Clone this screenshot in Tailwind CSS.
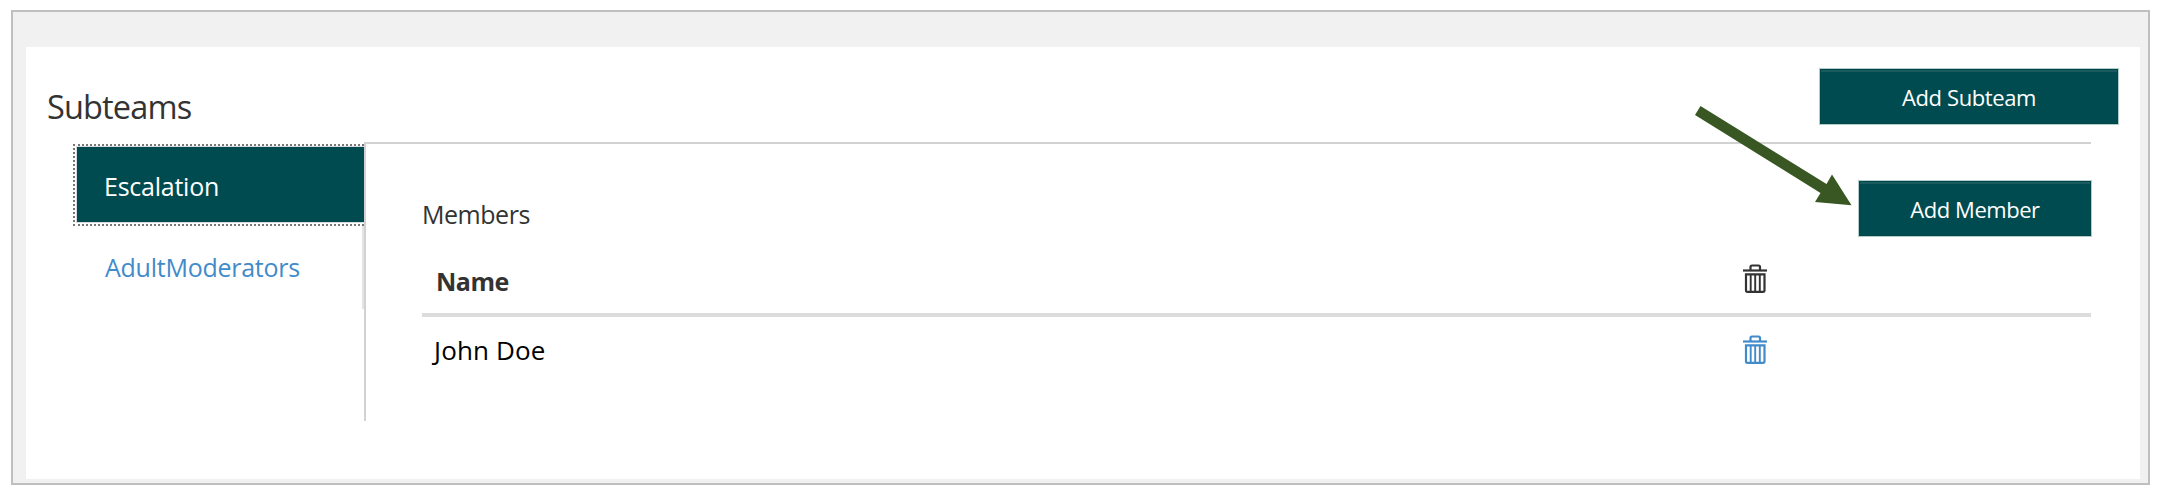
<!DOCTYPE html>
<html lang="en">
<head>
<meta charset="utf-8">
<title>Subteams</title>
<script src="https://cdn.jsdelivr.net/npm/@tailwindcss/browser@4"></script>
</head>
<body class="bg-white font-['Open_Sans','Noto_Sans',sans-serif] text-[#333]">
<svg class="hidden">
  <symbol id="trash" viewBox="0 0 24 29" fill="none" stroke="currentColor">
    <path d="M0 6.5H24" stroke-width="2.2"/>
    <path d="M7.500 6V3Q7.500 1.500 9 1.500H15.500Q17 1.500 17 3V6" stroke-width="2.200"/>
    <path d="M3 10.400H21.500V26.500Q21.500 27.800 20 27.800H4.500Q3 27.800 3 26.500Z" stroke-width="2.200"/>
    <path d="M7.700 10V28M12.200 10V28M16.800 10V28" stroke-width="1.900"/>
  </symbol>
</svg>
<div class="relative h-[491px] w-[2157px] overflow-hidden pl-[11px] pt-2.5">
  <div class="h-[475px] w-[2139px] border-2 border-[#bfbfbf] bg-[#f1f1f1] pl-[13px] pt-[35px]">
    <main class="h-[432px] w-[2114px] bg-white">
      <header class="flex h-[95px] items-start justify-between pl-[21px] pr-[22px]">
        <h1 class="mt-[40px] text-[32.5px] leading-10 tracking-[-0.85px]">Subteams</h1>
        <button class="mt-[22px] h-[55px] w-[298px] border border-[#00474a] bg-[#004b4f] text-[22px] leading-none tracking-[-0.4px] text-white shadow-[inset_0_2px_0_#1b5b5f,0_0_0_1px_#b5cccc]">Add Subteam</button>
      </header>
      <div class="flex pl-[47px]">
        <nav class="w-[291px]">
          <div class="mt-[1.5px] h-[82px] border-2 border-r-0 border-dotted border-[#777] pl-0.5 pt-[1.5px]">
            <a class="flex h-[75px] items-center bg-[#004b4f] pl-[27px] pt-1 text-[25px] tracking-[-0.24px] text-white shadow-[0_0_0_1px_#d5dbdb]">Escalation</a>
          </div>
          <a class="flex h-[83px] items-center border-r-2 border-[#e4e4e4] pl-8 pt-0.5 text-[25px] tracking-[-0.25px] text-[#428bca]">AdultModerators</a>
        </nav>
        <section class="h-[279px] w-[1727px] border-l-2 border-t-2 border-[#d2d2d2] pl-14">
          <div class="flex h-[93px] items-start justify-between">
            <h2 class="mt-[50px] text-[25px] leading-10 tracking-[-0.47px]">Members</h2>
            <button class="mt-[37px] h-[55px] w-[232px] border border-[#00474a] bg-[#004b4f] text-[22px] leading-none tracking-[-0.46px] text-white shadow-[inset_0_2px_0_#1b5b5f,0_0_0_1px_#b5cccc]">Add Member</button>
          </div>
          <div class="flex h-20 items-start border-b-4 border-[#dcdcdc] pl-3.5">
            <span class="mt-[24px] w-[1307px] text-[25px] font-bold leading-10 tracking-[-0.5px]">Name</span>
            <svg class="mt-[27px] h-[29px] w-6"><use href="#trash"/></svg>
          </div>
          <div class="flex items-start pl-3">
            <span class="mt-[13px] w-[1309px] text-[26px] leading-10 tracking-[0.15px] text-black">John Doe</span>
            <svg class="mt-[18px] h-[29px] w-6 text-[#428bca]"><use href="#trash"/></svg>
          </div>
        </section>
      </div>
    </main>
  </div>
  <svg class="absolute left-[1690px] top-[100px]" width="166" height="110"><path d="M10.500 6L136.500 84L142 74.500L161.500 105.300L125 102L130.500 93L5 15Z" fill="#385723"/></svg>
</div>
</body>
</html>
